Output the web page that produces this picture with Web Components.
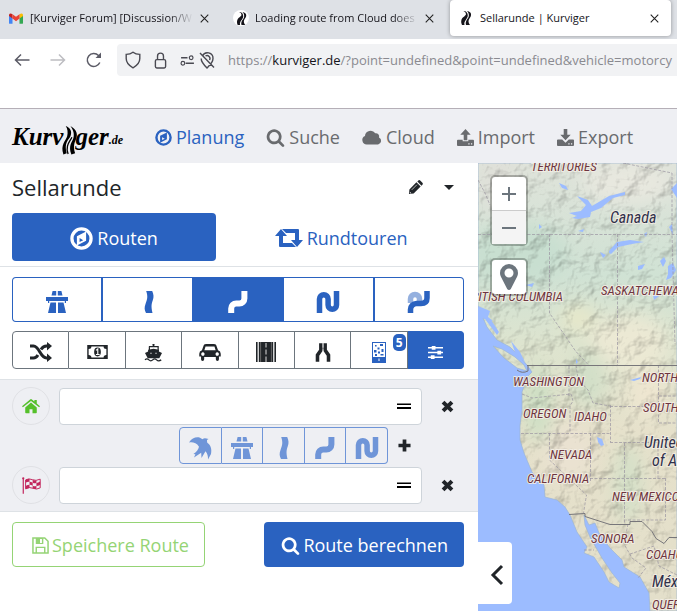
<!DOCTYPE html>
<html lang="de">
<head>
<meta charset="utf-8">
<title>Sellarunde | Kurviger</title>
<style>
html,body{margin:0;height:100%}
body{font-family:"Open Sans","Noto Sans",sans-serif;color:#212529;overflow:hidden;
--blue:#2a62c0;--panel:#eeeff3;--line:#dee2e6;--grey:#6c757d}
</style>
</head>
<body>
<kv-window></kv-window>
<script>
const define=(name,html,setup)=>{
  const t=document.createElement('template');
  t.innerHTML=`<style>*{box-sizing:border-box}button,input{font:inherit;color:inherit;margin:0}button{padding:0;background:none;border:0;cursor:pointer}</style>`+html;
  customElements.define(name,class extends HTMLElement{
    constructor(){super();this.attachShadow({mode:'open'}).append(t.content.cloneNode(true));}
    connectedCallback(){if(setup&&!this.ready){this.ready=true;setup(this,this.shadowRoot);}}
  });
};

/* Icons: name -> [viewBox width, viewBox height, markup] */
const N='fill="none" stroke="currentColor"';
const ICONS={
gmail:[16,12,'<path d="M0 1.5V11q0 1 1 1h3V5z" fill="#4285f4"/><path d="M12 5v7h3q1 0 1-1V1.5z" fill="#34a853"/><path d="M12 1v5l4-3V1.6Q15-.8 12 1z" fill="#fbbc04"/><path d="M0 1.6V3l4 3V1Q1-.8 0 1.6z" fill="#c5221f"/><path d="M4 1l4 3 4-3v5L8 9 4 6z" fill="#ea4335"/>'],
kurviger:[16,16,'<path d="M5.4 1q2.6.8 2.6 3c0 2-3.800 3-4.600 6-.5 2 0 3.500.6 5h2.500c-1-4 3-6 3.300-9C10 3 8.500 1 5.400 1z"/><path d="M9 1c3.500.5 4.700 2.700 3.800 5.200-.8 2-2.300 3-2.300 5 0 1.400.8 2.800 1.500 3.800H8c-1.200-4.500 2.600-6.300 2.800-9C11 4 10.400 2 9 1z"/>'],
close:[10,10,`<path d="M.8.8l8.400 8.400M9.200.8L.8 9.200" ${N} stroke-width="1.200"/>`],
back:[16,14,`<path d="M15.500 7H1.500M7 1.500L1.500 7 7 12.500" ${N} stroke-width="1.500"/>`],
forward:[16,14,`<path d="M.5 7h14M9 1.500L14.500 7 9 12.500" ${N} stroke-width="1.500"/>`],
reload:[16,16,`<path d="M13.800 10.500A6.500 6.500 0 1 1 12.500 3.500L14 5" ${N} stroke-width="1.500"/><path d="M15 .5V6H9.500z"/>`],
shield:[16,18,`<path d="M8 1.200c2 1.600 4 2.200 6.800 2.200v4.200c0 4-3 7.200-6.800 9.200-3.800-2-6.800-5.200-6.800-9.200V3.400C4 3.400 6 2.800 8 1.200z" ${N} stroke-width="1.400"/>`],
lock:[14,18,`<rect x="1.500" y="8" width="11" height="9" rx="1.500" ${N} stroke-width="1.500"/><path d="M3.800 8V4.200a3.200 3.200 0 0 1 6.400 0V8" ${N} stroke-width="1.500"/>`],
perms:[16,12,`<path d="M1 3h7M6 9h9" ${N} stroke-width="1.400"/><circle cx="12" cy="3" r="2" ${N} stroke-width="1.300"/><circle cx="3" cy="9" r="2" ${N} stroke-width="1.300"/>`],
noloc:[16,17,`<path d="M3.500 4a5.500 5.500 0 0 1 10.500 2.500c0 4-3.500 7-6 9.500-3-3-6-6-5.800-9.500M6.500 4a2.900 2.900 0 0 1 4 4M1 1l14 14.500" ${N} stroke-width="1.400"/>`],
compass:[24,24,`<circle cx="12" cy="12" r="10" ${N} stroke-width="3.400"/><path fill-rule="evenodd" d="M16.800 4.800v9.500l-9.600 5V9.700zM10 11.500v4.200l3.800-2z"/>`],
search:[1792,1792,'<path d="M1216 832q0-185-131.500-316.500t-316.500-131.500-316.500 131.500-131.500 316.500 131.500 316.500 316.500 131.500 316.500-131.500 131.500-316.500zm512 832q0 52-38 90t-90 38q-54 0-90-38l-343-342q-179 124-399 124-143 0-273.500-55.500t-225-150-150-225-55.500-273.500 55.500-273.500 150-225 225-150 273.500-55.500 273.500 55.500 225 150 150 225 55.500 273.500q0 220-124 399l343 343q37 37 37 90z"/>'],
cloud:[21,16,'<path d="M5 15.500a4.700 4.700 0 0 1-2-9A6 6 0 0 1 14 3.500a3.500 3.500 0 0 1 4 4.500 4 4 0 0 1-1 7.500z"/>'],
upload:[18,18,'<path d="M9 0l5.500 6h-3.600v6H7.100V6H3.500z"/><path fill-rule="evenodd" d="M1 11.500h5v1.600h6v-1.600h5q1 0 1 1V17q0 1-1 1H1q-1 0-1-1v-4.500q0-1 1-1zM12 15v1.400h1.300V15zm2.800 0v1.400h1.300V15z"/>'],
download:[18,18,'<path d="M7.100 0h3.800v6h3.600L9 12 3.500 6h3.600z"/><path fill-rule="evenodd" d="M1 11h4.500L9 14.500l3.500-3.500H17q1 0 1 1v5q0 1-1 1H1q-1 0-1-1v-5q0-1 1-1zM12 15v1.400h1.300V15zm2.800 0v1.400h1.300V15z"/>'],
pencil:[16,16,'<path fill-rule="evenodd" d="M1.500 10L9 2.500 13.500 7 6 14.500 1 15zM2 12.500v1.600h1.600z"/><path d="M10 1.600L11 .6q1-1 2 0L15.400 3q1 1 0 2l-1 1z"/><path d="M4 10.500L9.500 5" stroke="#fff" stroke-width=".7"/>'],
caret:[10,5,'<path d="M0 0h10L5 5z"/>'],
retweet:[28,18,'<path d="M6 0l6 7H8v7h9l4 4H5q-1 0-1-1V7H0z"/><path d="M7 0h16q1 0 1 1v10h4l-6 7-6-7h4V4h-9z"/>'],
highway:[24,24,'<path d="M7.600 1h3.600v4.600H6.500zM12.800 1h3.600l1.100 4.600h-4.700z"/><path d="M1 7h22v4h-2v2h-1.200v-2H4.200v2H3v-2H1z"/><path d="M5.500 12.500H11V23H3zM13 12.500h5.500L21 23h-8z"/>'],
curve1:[24,24,`<path d="M10.200 1h6c1.500 3.500 1.800 6 .5 9.500-1.200 3.500-1.700 6-.2 12.500H10c-1.600-3-1.800-5.500-.5-9 1.800-5 2.600-7 .7-13z"/>`],
curve2:[24,24,`<path d="M5.200 23v-4.500a5 5 0 0 1 5-5h3.200a5 5 0 0 0 5-5V1" ${N} stroke-width="6"/>`],
curve3:[24,24,`<path d="M3.500 23V9a4.300 4.300 0 0 1 8.600 0v6a4.200 4.200 0 0 0 8.400 0V1" ${N} stroke-width="5.500"/>`],
curve4:[24,24,`<path d="M3.500 13V9a4.500 4.500 0 0 1 9 0v2" ${N} stroke-width="5.500" opacity=".5"/><path d="M3.500 23v-3.500a6 6 0 0 1 6-6h4.500q6 0 6-5.500V1" ${N} stroke-width="5.500"/>`],
shuffle:[22,20,`<path d="M0 4h3.500c6 0 6.500 12 13 12h1M0 16h3.500c2.200 0 3.400-1.300 4.400-3M11 7.500C12.300 5.500 13.800 4 16.500 4h1" ${N} stroke-width="3"/><path d="M17 0l5 4-5 4.500zM17 11.500l5 4.500-5 4z"/>`],
money:[22,15,'<path fill-rule="evenodd" d="M0 0h22v15H0zM4.500 1.600q0 2.700-3 2.700v6.400q3 0 3 2.700h13q0-2.700 3-2.700V4.300q-3 0-3-2.700z"/><ellipse cx="11" cy="7.500" rx="3.600" ry="4.700"/><path d="M9.400 5.800l1.900-1.500V10M9.300 10.200h4" fill="none" stroke="#fff" stroke-width="1.200"/>'],
ship:[24,22,`<path d="M10.500 1h3M12 0v3M6 3.500h12V9" ${N} stroke-width="1.600"/><path d="M6.700 4v4" ${N} stroke-width="1.600"/><path d="M5 7.500l7-1.500 7 1.500v2.300l4 1.700-3.500 7h-15L1 11.500l4-1.700z"/><path d="M1 20.500q2.500-2.500 5 0t5 0 5 0 6 0" ${N} stroke-width="1.700"/><path d="M8 12h1.500M14.500 12H16" stroke="#fff" stroke-width="1.300"/>`],
car:[24,19,'<path fill-rule="evenodd" d="M5 1.500Q5.500 0 8 0h8q2.500 0 3 1.500L21 7q3 1 3 4v3h-2v3q0 2-1.700 2T18.500 17v-2.500h-13V17q0 2-1.800 2T2 17v-3H0v-3q0-3 3-4zM7 2.800L5.700 7h12.600L17 2.800zM4 9.300a1.900 1.900 0 1 0 .1 0zM20 9.300a1.900 1.900 0 1 0 .1 0z"/>'],
road:[20,20,'<path d="M0 0h1.600v20H0zM2.800 0h14.400v20H2.800zM18.400 0H20v20h-1.600z"/><path d="M10 1v4.500M10 7.500v5M10 14.500V20" stroke="#ddd" stroke-width="1"/><path d="M4.600 0v20M15.400 0v20" stroke="#777" stroke-width=".8"/>'],
merge:[18,21,`<path d="M6.600 0v8L2.800 13.500V21M11.400 0v8l3.800 5.500V21" ${N} stroke-width="4"/><path d="M9 0v5M9 7v2" stroke="#fff" stroke-width=".8"/>`],
gravel:[14,21,`<rect x=".5" y=".5" width="13" height="20" ${N}/><path d="M0 15h14v6H0z"/><path d="M3 3h1.600v1.600H3zM8 2h3v2H8zM5.500 5.500h2v2h-2zM2 8h2.500v2.500H2zM9.500 7h2v3h-2zM6 9.500h2v2H6zM3 12h2v2H3zM8.500 12h3v1.500h-3z"/><path d="M7 16.500V19" stroke="#fff" stroke-width="1"/>`],
sliders:[18,16,`<path d="M1 3h16M1 8h16M1 13h16" ${N} stroke-width="1.500"/><path d="M5 1h4v4H5zM11 6h4v4h-4zM4 11h4v4H4z"/>`],
home:[24,20,'<path d="M12 4.800l7.700 6.400V18q0 1-1 1H14v-5.500h-4V19H5.300q-1 0-1-1v-6.800z"/><path d="M12 0q.6 0 1.200.5L16.500 3.300V1.200h3.200v4.700L24 9.500l-1.200 1.600L12 2.500 1.200 11.100 0 9.500 10.800.5Q11.400 0 12 0z"/>'],
flag:[24,21,`<path d="M1.600 1v20" ${N} stroke-width="1.500"/><circle cx="1.600" cy="1.400" r="1.400"/><path d="M4.500 3.500q4-2.500 8.500-.4t10-.6v11q-4.500 2.700-9 .5t-9.500.8z" ${N} stroke-width="1.200"/><path d="M5 3q2.300-1 4.500-.6v3.300Q7 5.500 5 6.700zM13.500 3.700q2.200 1 4.700.4v3.300q-2.500.5-4.700-.5zM9.500 5.800q2 .1 4 1.100v3.800q-2-1-4-1zM18.200 7.400q2.300-.5 4.800-2v4q-2.500 1.400-4.800 1.700zM5 10.700q2.200-1 4.500-1v4Q7 13.700 5 14.800zM13.500 10.700q2.300 1 4.700.5v3.500q-2.500.4-4.700-.8z"/>`],
swallow:[24,24,'<path d="M1 6.500C4 2 8 .6 12 1.700l2.500 1.600q1.500-1.600 4-.8l2 .6-1.500.8q0 2 .3 2.800C22.800 9 24 13 23 18l-3 5.500q.3-5-2.500-8.300L13.500 22l-.3-5.200L6 21.500l1.400-3.300-2-.3c3-1.800 5-4.300 5.600-7.200C8.500 6.500 4.500 6 1 6.500z"/>'],
plus:[14,14,`<path d="M7 .5v13M.5 7h13" ${N} stroke-width="4"/>`],
cross:[14,14,`<path d="M2.200 2.200l9.600 9.600M11.800 2.200l-9.600 9.600" ${N} stroke-width="4.200"/>`],
grip:[14,6,'<path d="M0 0h14v1H0z" opacity=".5"/><path d="M0 1h14v1H0zM0 4h14v2H0z"/>'],
save:[18,18,`<path d="M1 1h12.500L17 4.500V17H1z" ${N} stroke-width="1.600"/><path d="M4.500 17v-6h9v6" ${N} stroke-width="1.500"/><path fill-rule="evenodd" d="M4 1h8v6.500H4zM8.500 2v4.300h2V2z"/>`],
pin:[18,26,'<path fill-rule="evenodd" d="M9 0a9 9 0 0 1 9 9q0 1.800-.8 3.500L10.800 25q-.7 1-1.800 1t-1.800-1L.8 12.500Q0 10.800 0 9a9 9 0 0 1 9-9zm0 4.500A4.500 4.500 0 1 0 9 13.500 4.500 4.500 0 1 0 9 4.500z"/>'],
zoomin:[16,16,`<path d="M8 1v14M1 8h14" ${N} stroke-width="2"/>`],
zoomout:[16,16,`<path d="M1 8h14" ${N} stroke-width="2"/>`],
chevron:[12,20,`<path d="M11 1L2 10l9 9" ${N} stroke-width="3"/>`],
curves:[18,32,'<path d="M5 1c5 2 7 6 5 11-2 4-7 7-4 18l-3.500 1.500C-1 21 5 17 6.500 12 7.500 8 7 4 5 1z"/><path d="M10 1c7 4 8 9 6 14-1.600 4-3.500 8-1 15l-4 1.500c-3.500-9 .5-13 2-17 1.500-5 0-9.500-3-13.500z"/><path d="M7.500 31C4 22 10 17 11.500 13" fill="none" stroke="currentColor" stroke-width="1.400"/>']
};
define('kv-icon',`<style>:host{display:inline-flex;flex:none}svg{display:block;fill:currentColor;overflow:visible}</style>`,(el,root)=>{
  const [w,h,m]=ICONS[el.getAttribute('name')],size=el.getAttribute('w');
  root.innerHTML+=`<svg viewBox="0 0 ${w} ${h}" width="${size}" height="${Math.round(size*h/w)}" aria-hidden="true">${m}</svg>`;
});

define('browser-tab',`<style>
:host{display:flex;align-items:center;flex:0 1 221px;min-width:0;height:36px;border-radius:4px;padding:0 11px 0 8px;gap:6px;font-size:11px;color:#15141a}
:host([active]){background:#fff;box-shadow:0 0 4px rgba(0,0,0,.35)}
.fav{display:grid;place-items:center;width:16px;height:16px;border-radius:8px;background:#fff}
:host([plain]) .fav{background:none}
.t{flex:1;min-width:0;text-align:left;white-space:nowrap;overflow:hidden;height:20px;line-height:20px;-webkit-mask-image:linear-gradient(90deg,#000 85%,transparent)}
:host([active]) .t{-webkit-mask-image:none}
.x{display:grid;color:#222;padding:1px}</style>
<span class="fav"><slot name="icon"></slot></span><button class="t"><slot></slot></button><button class="x" aria-label="Tab schließen"><kv-icon name="close" w="9"></kv-icon></button>`);

define('browser-chrome',`<style>
:host{display:block;background:#fff;border-bottom:1px solid #b5afb7;height:109px}
.tabs{display:flex;gap:4px;height:39px;background:#dee1e6;overflow:hidden}
.bar{display:flex;align-items:center;height:42px;padding:0 0 0 14px;color:#5b5b66}
.nav{display:flex;align-items:center;gap:20px;width:103px}
.nav button{display:grid}
.url{flex:1;min-width:0;height:32px;display:flex;align-items:center;gap:13px;background:#f1f2f4;border-radius:4px 0 0 4px;padding-left:8px;overflow:hidden}
.url button{display:grid;color:#4a4a52}
.pair{display:flex;align-items:center;gap:4px}
.addr{white-space:nowrap;font-size:13px;color:#8a8a90}.addr b{font-weight:400;color:#15141a}
</style>
<div class="tabs">
<browser-tab plain><kv-icon slot="icon" name="gmail" w="14"></kv-icon>[Kurviger Forum] [Discussion/W</browser-tab>
<browser-tab><kv-icon slot="icon" name="kurviger" w="15"></kv-icon>Loading route from Cloud does</browser-tab>
<browser-tab active><kv-icon slot="icon" name="kurviger" w="16"></kv-icon>Sellarunde | Kurviger</browser-tab>
</div>
<div class="bar"><div class="nav">
<button aria-label="Zurück"><kv-icon name="back" w="16"></kv-icon></button>
<button aria-label="Vor" style="opacity:.4"><kv-icon name="forward" w="16"></kv-icon></button>
<button aria-label="Neu laden"><kv-icon name="reload" w="16"></kv-icon></button></div>
<div class="url"><button aria-label="Schutz"><kv-icon name="shield" w="16"></kv-icon></button>
<button aria-label="Sicherheit"><kv-icon name="lock" w="13"></kv-icon></button>
<div class="pair"><button aria-label="Berechtigungen"><kv-icon name="perms" w="15"></kv-icon></button><button aria-label="Standort blockiert"><kv-icon name="noloc" w="16"></kv-icon></button></div>
<div class="addr" role="textbox" aria-label="Adresse">https://<b>kurviger.de</b>/?point=undefined&amp;point=undefined&amp;vehicle=motorcy</div></div></div>`);

define('nav-link',`<style>:host{display:block}a{display:flex;align-items:center;gap:4px;color:#696b6e;text-decoration:none;font-size:18px;line-height:30px}
:host([active]) a{color:var(--blue)}</style><a href="#"><slot name="icon"></slot><slot></slot></a>`);

define('app-header',`<style>
:host{display:flex;align-items:center;height:54px;background:var(--panel);padding:2px 12px 0;box-sizing:border-box}
.logo{display:flex;align-items:center;color:#000;text-decoration:none;font:italic bold 25px/30px "Liberation Serif",serif;width:143px}
.logo kv-icon{margin:6px -3px 0 -2px}
small{font-size:12px;align-self:flex-end}
nav{display:flex;gap:22px}</style>
<a class="logo" href="#" aria-label="Kurviger.de"><span>Kurv</span><kv-icon name="curves" w="17"></kv-icon><span>ger</span><small>.de</small></a>
<nav>
<nav-link active><kv-icon slot="icon" name="compass" w="17"></kv-icon>Planung</nav-link>
<nav-link><kv-icon slot="icon" name="search" w="19"></kv-icon>Suche</nav-link>
<nav-link><kv-icon slot="icon" name="cloud" w="20"></kv-icon>Cloud</nav-link>
<nav-link><kv-icon slot="icon" name="upload" w="17"></kv-icon>Import</nav-link>
<nav-link><kv-icon slot="icon" name="download" w="17"></kv-icon>Export</nav-link>
</nav>`);

define('button-group',`<style>
:host{display:flex;--c:var(--grey);color:#212529;height:38px}
:host([kind=style]){--c:var(--blue);color:var(--blue);height:45px}
:host([kind=leg]){--c:#6f95d8;color:#6f95d8;width:209px;height:37px}
button{position:relative;flex:1;display:grid;place-items:center;border:1px solid var(--c);border-left-width:0;padding-top:4px}
:host([kind=style]) button:not(:last-of-type){border-right-width:2px}
button:first-of-type{border-left-width:1px;border-radius:4px 0 0 4px}
button:last-of-type{border-radius:0 4px 4px 0}
button.on{background:var(--blue);border-color:var(--blue);color:#fff}
.badge{position:absolute;right:1px;top:2px;background:var(--blue);color:#fff;border-radius:5px;padding:0 3px;font-weight:700;font-size:12px;line-height:17px}
</style>`,(el,root)=>{
  const w=el.getAttribute('size');
  el.getAttribute('items').split(' ').forEach(item=>{
    const [name,label,size]=item.split(':');
    const b=document.createElement('button');
    b.setAttribute('aria-label',label);
    b.innerHTML=`<kv-icon name="${name}" w="${size||w}"></kv-icon>`;
    if(el.getAttribute('on')===name)b.className='on';
    if(name==='gravel'){b.innerHTML='<kv-icon name="gravel" w="14" style="color:var(--blue)"></kv-icon><span class="badge">5</span>';}
    root.append(b);
  });
});

define('way-point',`<style>
:host{display:grid;grid-template-columns:38px 1fr 50px;align-items:center}
.mark{display:grid;place-items:center;width:38px;height:38px;border:1px solid #e0e1e5;border-radius:50%}
.field{display:flex;align-items:center;margin-left:9px;height:37px;background:#fff;border:1px solid #ced4da;border-radius:4px;padding-right:10px}
input{flex:1;min-width:0;border:0;outline:0;background:none;padding:0 12px;font-size:16px}
.grip{display:grid;color:#000}.x{display:grid;place-items:center}</style>
<button class="mark"><slot name="icon"></slot></button>
<label class="field"><input type="text" aria-label="Wegpunkt"><kv-icon class="grip" name="grip" w="14"></kv-icon></label>
<button class="x" aria-label="Wegpunkt löschen"><kv-icon name="cross" w="13"></kv-icon></button>`);

define('kv-button',`<style>
:host{display:flex}
button{flex:1;display:flex;align-items:center;justify-content:center;gap:4px;font-size:18px;line-height:28px;height:48px;padding-top:2px;border-radius:4px;color:var(--blue);white-space:nowrap}
:host([primary]) button{background:var(--blue);color:#fff}
:host([action]) button{height:45px;padding:1px 16px 0 17px;gap:3px}
:host([save]) button{border:1px solid #95d475;color:#95d475;padding:1px 15px 0 19px}
</style><button><slot name="icon"></slot><slot></slot></button>`);

define('route-sidebar',`<style>
:host{display:flex;flex-direction:column;background:#fff;min-width:0}
.title{display:flex;align-items:center;height:50px;padding:0 24px 2px 12px;gap:21px}
h1{flex:1;margin:0;font-size:22px;line-height:30px;font-weight:400}
.title button{display:grid}
.modes{display:flex;padding:0 12px 5px;border-bottom:1px solid var(--line)}
.modes kv-button{flex:1 1 auto}
.opts{display:grid;gap:9px;padding:10px 14px 10px 12px}
.points{background:var(--panel);border:solid var(--line);border-width:1px 0;padding:7px 6px 7px 12px;display:grid;gap:2px}
.leg{display:flex;justify-content:flex-end;align-items:center;gap:10px;padding-right:61px}
.leg>button{display:grid}
.actions{display:flex;justify-content:space-between;padding:10px 14px 0 12px}
</style>
<div class="title"><h1>Sellarunde</h1><button aria-label="Umbenennen"><kv-icon name="pencil" w="15"></kv-icon></button><button aria-label="Menü"><kv-icon name="caret" w="10"></kv-icon></button></div>
<div class="modes"><kv-button primary><kv-icon slot="icon" name="compass" w="23"></kv-icon>Routen</kv-button><kv-button><kv-icon slot="icon" name="retweet" w="28"></kv-icon>Rundtouren</kv-button></div>
<div class="opts">
<button-group kind="style" size="24" on="curve2" items="highway:Schnell curve1:Schnell_kurvig curve2:Kurvig curve3:Extrakurvig curve4:Gemischt"></button-group>
<button-group size="22" on="sliders" items="shuffle:Mischen money:Maut:21 ship:Fähre:19 car:Auto:22 road:Schnellstraße:20 merge:Hauptstraße:16 gravel:Unbefestigt:14 sliders:Optionen:17"></button-group>
</div>
<div class="points">
<way-point><kv-icon slot="icon" name="home" w="18" style="color:#55c02b"></kv-icon></way-point>
<div class="leg"><button-group kind="leg" size="24" items="swallow:Luftlinie highway:Schnell curve1:Schnell_kurvig curve2:Kurvig curve3:Extrakurvig"></button-group><button aria-label="Hinzufügen"><kv-icon name="plus" w="13"></kv-icon></button></div>
<way-point><kv-icon slot="icon" name="flag" w="19" style="color:#c2255c"></kv-icon></way-point>
</div>
<div class="actions"><kv-button action save><kv-icon slot="icon" name="save" w="17"></kv-icon>Speichere Route</kv-button><kv-button action primary><kv-icon slot="icon" name="search" w="19"></kv-icon>Route berechnen</kv-button></div>`);

define('route-map',`<style>
:host{display:block;position:relative;overflow:hidden;background:#9cbcff;min-width:0}
.map{position:absolute;inset:0;width:100%;height:100%;display:block}
.map text{font-family:"Roboto Condensed","Liberation Sans Narrow",Roboto,sans-serif;font-style:italic;font-size:13px;fill:#6e3540;stroke:#f4efe6;stroke-width:2;paint-order:stroke;stroke-opacity:.85}
.map .c{font-size:16px;fill:#30304a}
.zoom,.pin{position:absolute;left:12px;border:2px solid rgba(0,0,0,.25);border-radius:5px;background:#fff;background-clip:padding-box;color:var(--grey);width:38px}
.zoom{top:12px}.pin{top:95px;height:38px;display:grid;place-items:center}
.zoom button{display:grid;place-items:center;width:100%;height:33px;padding-top:1px}
.zoom button+button{border-top:1px solid #ccc;background:#f4f4f4;height:34px}
.fold{position:absolute;left:0;bottom:7px;width:34px;height:62px;padding:3px 0 0 4px;background:#fff;border-radius:0 4px 4px 0;display:grid;place-items:center}
</style>
<svg class="map" viewBox="0 0 199 448" preserveAspectRatio="xMinYMin slice" role="img" aria-label="Karte">
<defs>
<path id="land" d="M0 0H199V448H172L171 430 162 414 146 404 144 397 132 385 121 370 117 360 111 362 106 352 107 362 112 374 124 395 134 410 142 420 141 425 131 419 126 409 116 394 106 390 109 384 99 369 92 352 87 344 79 337 67 334 66 322 54 309 46 290 42 277 42 262 44 247 44 229 49 214 54 209 49 202 42 194 32 184 19 177 9 164 5 155 10 156 6 151 0 143zM15 183L24 186 37 194 46 202 49 208 39 205 26 195z"/>
<clipPath id="lc"><use href="#land"/></clipPath>
<linearGradient id="g" x1="0" y1="0" x2="0" y2="1"><stop offset="0" stop-color="#dfe3da"/><stop offset=".25" stop-color="#d0e2d4"/><stop offset=".4" stop-color="#dde4cf"/><stop offset=".6" stop-color="#e6e1cb"/><stop offset="1" stop-color="#e3dfca"/></linearGradient>
<filter id="b" x="-50%" y="-50%" width="200%" height="200%"><feGaussianBlur stdDeviation="9"/></filter>
<filter id="relief" x="0" y="0" width="100%" height="100%" color-interpolation-filters="sRGB"><feTurbulence type="fractalNoise" baseFrequency=".05" numOctaves="4" seed="8"/><feDiffuseLighting surfaceScale="5" lighting-color="#fff" diffuseConstant="1.2"><feDistantLight azimuth="225" elevation="55"/></feDiffuseLighting></filter>
</defs>
<g clip-path="url(#lc)"><rect width="199" height="448" fill="url(#g)"/>
<g filter="url(#b)"><ellipse cx="150" cy="20" rx="45" ry="20" fill="#e8e8df"/><ellipse cx="20" cy="20" rx="20" ry="30" fill="#dfe0d9"/><ellipse cx="40" cy="90" rx="50" ry="30" fill="#c8dfd0"/><ellipse cx="150" cy="180" rx="40" ry="28" fill="#ece9d4"/><ellipse cx="100" cy="155" rx="18" ry="12" fill="#e8e8c9"/><ellipse cx="60" cy="240" rx="14" ry="40" fill="#cddfc4"/><ellipse cx="110" cy="215" rx="18" ry="30" fill="#d2dfc8"/><ellipse cx="150" cy="320" rx="14" ry="40" fill="#d4e0c8"/><ellipse cx="90" cy="290" rx="25" ry="30" fill="#eae2d1"/><ellipse cx="170" cy="230" rx="20" ry="25" fill="#eee6d0"/></g>
<rect width="199" height="448" filter="url(#relief)" opacity=".3" style="mix-blend-mode:multiply"/></g>
<use href="#land" fill="none" stroke="#9cb6d6" stroke-width=".7"/>
<g fill="#9cbcff"><path d="M81 20l7 3 2 4-6-2zM99 33l11 4 4 6 17-10 16-4v3l-12 3-12 10-10 4-1 5-12 2-6-1 5-2-8-3 12-2 5-6zM100 68l6-2-1 3zM61 61l3 3-3 2zM131 88l8-9 13-2 14 2-12 2-14 3-7 7-2-1zM122 89l6 3-3 3zM166 71l3-2-1 5zM160 103l7-2-3 5-4 1zM182 98l4-4 2 4-3 6zM190 103l5-3 3 7-5 8-5 2 2-6zM191 64l3-3 1 11zM193 26l6-6v15zM175 132l6 1-5 4zM48 122l8-2-2 4zM0 143l12 5-2 6 5 4-9-2zM7 156l6 1 8 12-2 3zM33 178l9 11 5 10-9-7zM152 217l11-3-1 2-6 2zM119 274l5 2 2 6-3 1-3-4zM98 196l2 3-2 2z"/></g>
<g fill="none" stroke="#9a94a0" stroke-width=".7" stroke-dasharray="3 1.500"><path d="M0 17l7 13 5 12M0 71.500H199M71.500 71V150l26 38 13 14M139.500 71V202M145 0l49 10V71l3 110M91 203v31M44 231l10 4 39-4 2 7-3 5V270M43 270.500h89M98 202l2 14 10 11 5 13 17 3M132.500 242v37M132 243.500h48M180.500 202V260h19M181 233h18M132 279.500h48v36M71.500 270v27l37 35-3 18M112.500 270v48M146.500 280v80M112 315.500h75M187.500 315v42h-40M106 387h10M150 361l-4 20 8 14 14 10-8 10M152 391l24-8 5 20 18 9"/></g>
<g fill="none" stroke="#77767a" stroke-width="1"><path d="M49 202.500H199M91 351.500l16-1v3l25 8h20v-3h12l10 10 4 7 8 5 5-6h8M39 207q5 4 11 1l0-6"/></g>
<g><text x="53" y="8">TERRITORIES</text><text class="c" x="132" y="60">Canada</text><text x="123" y="132">SASKATCHEWA</text><text x="85" y="138" text-anchor="end">RITISH COLUMBIA</text><text x="35" y="223">WASHINGTON</text><text x="45" y="255">OREGON</text><text x="96" y="258">IDAHO</text><text x="72" y="296">NEVADA</text><text x="164" y="219">NORTH</text><text x="165" y="249">SOUTH</text><text class="c" x="166" y="285">United</text><text class="c" x="174" y="303">of Am</text><text x="49" y="320">CALIFORNIA</text><text x="134" y="338">NEW MEXICO</text><text x="113" y="380">SONORA</text><text x="168" y="396">COAHU</text><text class="c" x="174" y="424">Méxi</text><text x="174" y="446">QUER</text></g>
</svg>
<div class="zoom"><button aria-label="Vergrößern"><kv-icon name="zoomin" w="16"></kv-icon></button><button aria-label="Verkleinern"><kv-icon name="zoomout" w="16"></kv-icon></button></div>
<button class="pin" aria-label="Standort"><kv-icon name="pin" w="18"></kv-icon></button>
<button class="fold" aria-label="Einklappen"><kv-icon name="chevron" w="12"></kv-icon></button>`);

define('kv-window',`<style>
:host{display:flex;flex-direction:column;height:100vh;min-height:560px}
main{flex:1;min-height:0;display:grid;grid-template-columns:minmax(0,478px) minmax(0,1fr)}
</style><browser-chrome></browser-chrome><app-header></app-header><main><route-sidebar></route-sidebar><route-map></route-map></main>`);
</script>
</body>
</html>
